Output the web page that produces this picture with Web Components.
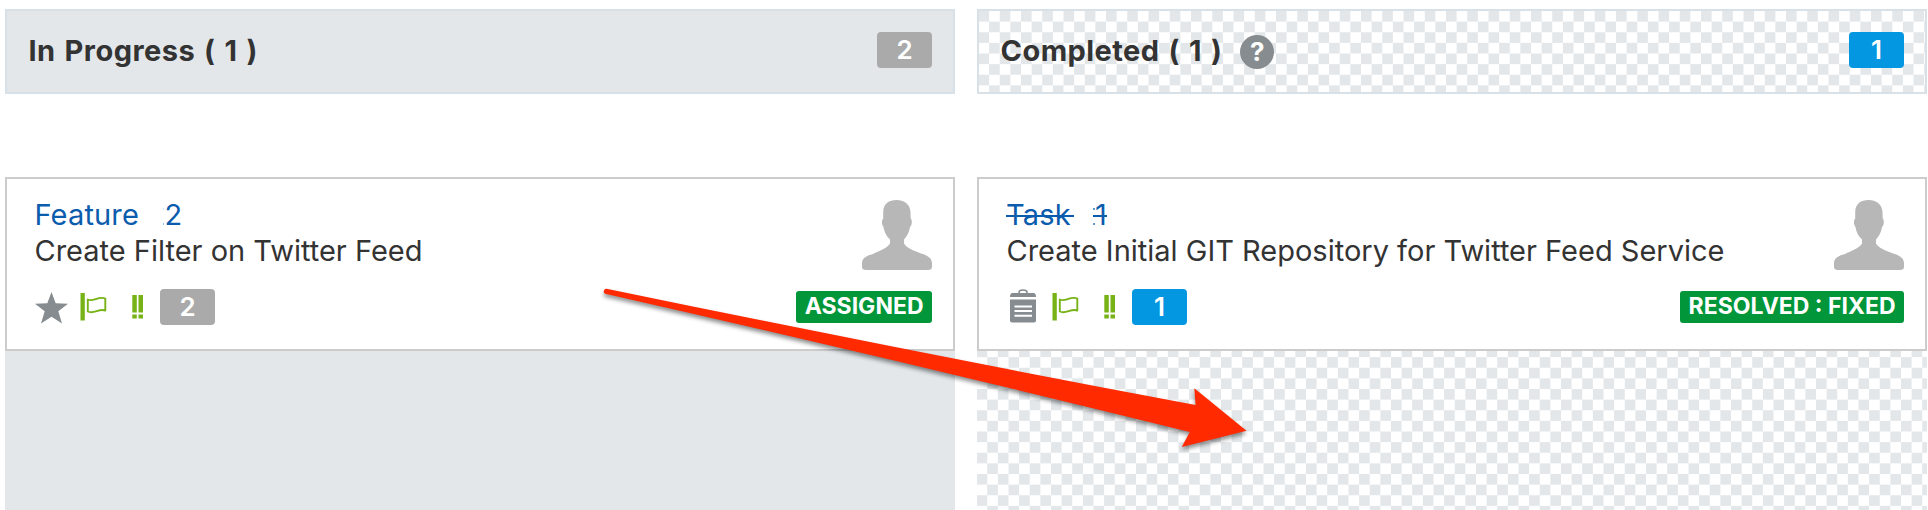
<!DOCTYPE html>
<html lang="en">
<head>
<meta charset="utf-8">
<title>Board</title>
<style>
  html, body { margin: 0; height: 100%; overflow: hidden; background: #fff; }
  body { font-family: Inter, "Liberation Sans", sans-serif; color: #333; }
</style>
</head>
<body>
<task-board>
  <board-column heading="In Progress ( 1 )" count="2">
    <task-card kind="Feature" number="2" status="ASSIGNED" points="2" icon="star">Create Filter on Twitter Feed</task-card>
  </board-column>
  <board-column heading="Completed ( 1 )" count="1" done>
    <task-card kind="Task" number="1" status="RESOLVED : FIXED" points="1" icon="clipboard" done>Create Initial GIT Repository for Twitter Feed Service</task-card>
  </board-column>
  <drag-arrow slot="overlay"></drag-arrow>
</task-board>

<script>
const define = (name, render) => customElements.define(name, class extends HTMLElement {
  connectedCallback() {
    if (this.shadowRoot) return;
    this.attachShadow({ mode: 'open' }).innerHTML = render(this);
  }
});

define('count-badge', () => `
  <style>
    :host { display: block; box-sizing: border-box; flex: none; width: 55px; height: 36px; border-radius: 4px;
      background: #aaa; color: #fff; font-size: 26px; font-weight: 600; line-height: 36px; text-align: center; }
    :host([active]) { background: #0397e1; }
  </style><slot></slot>`);

define('status-label', () => `
  <style>
    :host { display: block; height: 32px; padding: 0 8.500px; border-radius: 3px; background: #009639; color: #fff;
      font-size: 23px; font-weight: 700; line-height: 30px; white-space: nowrap; }
  </style><slot></slot>`);

define('user-avatar', () => `
  <style>:host { display: block; width: 70px; height: 70px; } svg { display: block; }</style>
  <svg width="70" height="70" viewBox="0 0 70 70"><path fill="#b7b7b7" d="M34.500 0C42 0 48 4 48.500 12L48.700 18.500C50.500 20 50 25.500 48 27C47 33 44.500 37 42 39.500V43.500C44 48 53 51 59 53.500C65 55 70 58 70 63V67Q70 70 66 70H4Q0 70 0 67V63C0 58 5 55.500 11 54C17 51 26 48 28 43.500V39.500C25 36.500 22.500 33 21.500 27C19.500 25 19.500 20 21.200 18.500V12C21.500 3.500 27 0 34.500 0Z"/></svg>`);

const ICONS = {
  star: `<svg width="34" height="32" viewBox="0 0 34 32"><path fill="#868c90" d="M16.500 0L20.700 11.200L33 11.800L23.300 19.200L27 31.500L16.500 24.800L6 31.500L9.700 19.200L0 11.800L12.300 11.200Z"/></svg>`,
  clipboard: `<svg width="34" height="34" viewBox="0 0 34 34"><path fill="none" stroke="#868c90" stroke-width="1.600" d="M12 5V3.500Q12 1 16 1T20 3.500V5"/><path fill="#868c90" d="M5 4H27Q29 4.500 29 8H3Q3 4.500 5 4ZM3 10.500H29V31.500Q29 33.500 27 33.500H5Q3 33.500 3 31.500Z"/><path stroke="#fff" stroke-width="2" d="M7.500 17.500H25M7.500 22H25M7.500 26.800H25"/></svg>`,
  flag: `<svg width="28" height="28" viewBox="0 0 28 28"><path fill="#77b317" d="M.5 0H4.800V27.500H.5Z"/><path fill="none" stroke="#77b317" stroke-width="1.900" stroke-linejoin="round" d="M7.800 6.500C13 9.500 18.500 2.500 25.300 5.500V17.500C19 15 14 21.500 7.800 18.500Z"/></svg>`,
  bang: `<svg width="12" height="24" viewBox="0 0 12 24"><path fill="#77b317" d="M.3 0H4.800V17.500H.3ZM6.500 0H11V17.500H6.500ZM.3 19.500H4.800V23.500H.3ZM6.500 19.500H11V23.500H6.500Z"/></svg>`
};

define('task-icon', el => `
  <style>:host { display: block; flex: none; } svg { display: block; }</style>
  ${ICONS[el.getAttribute('name')]}`);

define('task-card', el => {
  const a = n => el.getAttribute(n), done = el.hasAttribute('done');
  return `
  <style>
    :host { display: block; box-sizing: border-box; height: 174px; border: 2px solid #ccc; background: #fff;
      padding: 18px 21px 0 28px; font-size: 29px; line-height: 36px; }
    .row { display: flex; justify-content: space-between; align-items: flex-start; }
    .top { height: 92px; }
    .id { display: flex; height: 36px; color: #0b5cad; letter-spacing: .15px; }
    .kind { width: 130px; margin-left: -.5px; }
    .number { position: relative; }
    .number i { position: absolute; left: -2px; width: 1.500px; height: 2px; background: #8cc4ea; }
    .number i:nth-of-type(1) { top: 11px; opacity: .4; }
    .number i:nth-of-type(2) { top: 26px; }
    :host([done]) .number i { left: 0; background: #5c9bd0; opacity: 1; }
    :host([done]) .kind { width: 87px; margin-left: -1px; }
    :host([done]) .number .strike { padding-left: 2px; }
    .strike { position: relative; display: inline-block; }
    :host([done]) .strike::after { content: ""; position: absolute; left: 0; right: -3px; top: 18px; height: 2px; background: #0b5cad; }
    :host([done]) .number .strike::after { left: 0; right: 0; }
    .summary { white-space: nowrap; margin-left: -.5px; }
    .meta { display: flex; align-items: flex-start; height: 36px; }
    .meta task-icon:nth-of-type(1) { width: 34px; margin-top: ${done ? 0 : 3}px; }
    .meta task-icon:nth-of-type(2) { width: 28px; margin: 4px 0 0 11px; }
    .meta task-icon:nth-of-type(3) { width: 12px; margin: 6px 0 0 24px; }
    .meta count-badge { margin-left: 16px; }
    user-avatar { margin-top: 3px; }
    status-label { margin-top: 2px; }
  </style>
  <div class="row top">
    <div>
      <div class="id"><div class="kind"><span class="strike">${a('kind')}</span></div><div class="number"><i></i><i></i><span class="strike">${a('number')}</span></div></div>
      <div class="summary"><slot></slot></div>
    </div>
    <user-avatar></user-avatar>
  </div>
  <div class="row">
    <div class="meta">
      <task-icon name="${a('icon')}"></task-icon><task-icon name="flag"></task-icon><task-icon name="bang"></task-icon>
      <count-badge ${done ? 'active' : ''}>${a('points')}</count-badge>
    </div>
    <status-label>${a('status')}</status-label>
  </div>`;
});

define('help-icon', () => `
  <style>:host { display: block; width: 34px; height: 34px; border-radius: 50%; background: #868c90; color: #fff;
    font-size: 26px; font-weight: 700; line-height: 34px; text-align: center; }</style>?`);

define('board-column', el => {
  const done = el.hasAttribute('done');
  return `
  <style>
    :host { display: flex; flex-direction: column; min-width: 0; }
    header, .lane { background-color: #e3e7ea; }
    :host([done]) header, :host([done]) .lane {
      background: conic-gradient(#fff 25%, #e3e7ea 0 50%, #fff 0 75%, #e3e7ea 0) 0 0 / 21.250px 21.250px; }
    :host([done]) header { background-position: -.5px 0; background-origin: padding-box; background-clip: padding-box; }
    :host([done]) .lane { background-position: -.4px 169.500px; }
    header { display: flex; align-items: center; box-sizing: border-box; height: 85px; border: 2px solid #d8e1e8;
      padding: 0 21px 0 21.500px; font-size: 29px; font-weight: 700; line-height: 36px; }
    .title { letter-spacing: .45px; word-spacing: 1.700px; margin-top: -1px; white-space: nowrap; }
    help-icon { margin-left: 18px; }
    header count-badge { margin: -3px 0 0 auto; }
    .lane { flex: 1; margin-top: 83px; }
  </style>
  <header><span class="title">${el.getAttribute('heading')}</span>${done ? '<help-icon></help-icon>' : ''}
    <count-badge ${done ? 'active' : ''}>${el.getAttribute('count')}</count-badge></header>
  <div class="lane"><slot></slot></div>`;
});

define('drag-arrow', () => `
  <style>:host { display: block; position: absolute; left: 590px; top: 270px; width: 680px; height: 200px; pointer-events: none; }
    svg { display: block; filter: drop-shadow(0 3px 2px rgba(0,0,0,.45)); }</style>
  <svg width="680" height="200" viewBox="590 270 680 200"><path fill="#ff2a00" d="M606.500 288.700Q900 349.500 1195.600 405L1194.300 388.300L1246.500 430.700L1181.800 447L1189.800 432Q900 360.500 605 293.800C603 293 603.500 288.500 606.500 288.700Z"/></svg>`);

define('task-board', () => `
  <style>
    :host { position: relative; display: grid; grid-template-columns: 950px 950px; column-gap: 22px;
      box-sizing: border-box; height: 510px; padding: 9px 0 0 5px; overflow: hidden; }
  </style><slot></slot><slot name="overlay"></slot>`);
</script>
</body>
</html>
